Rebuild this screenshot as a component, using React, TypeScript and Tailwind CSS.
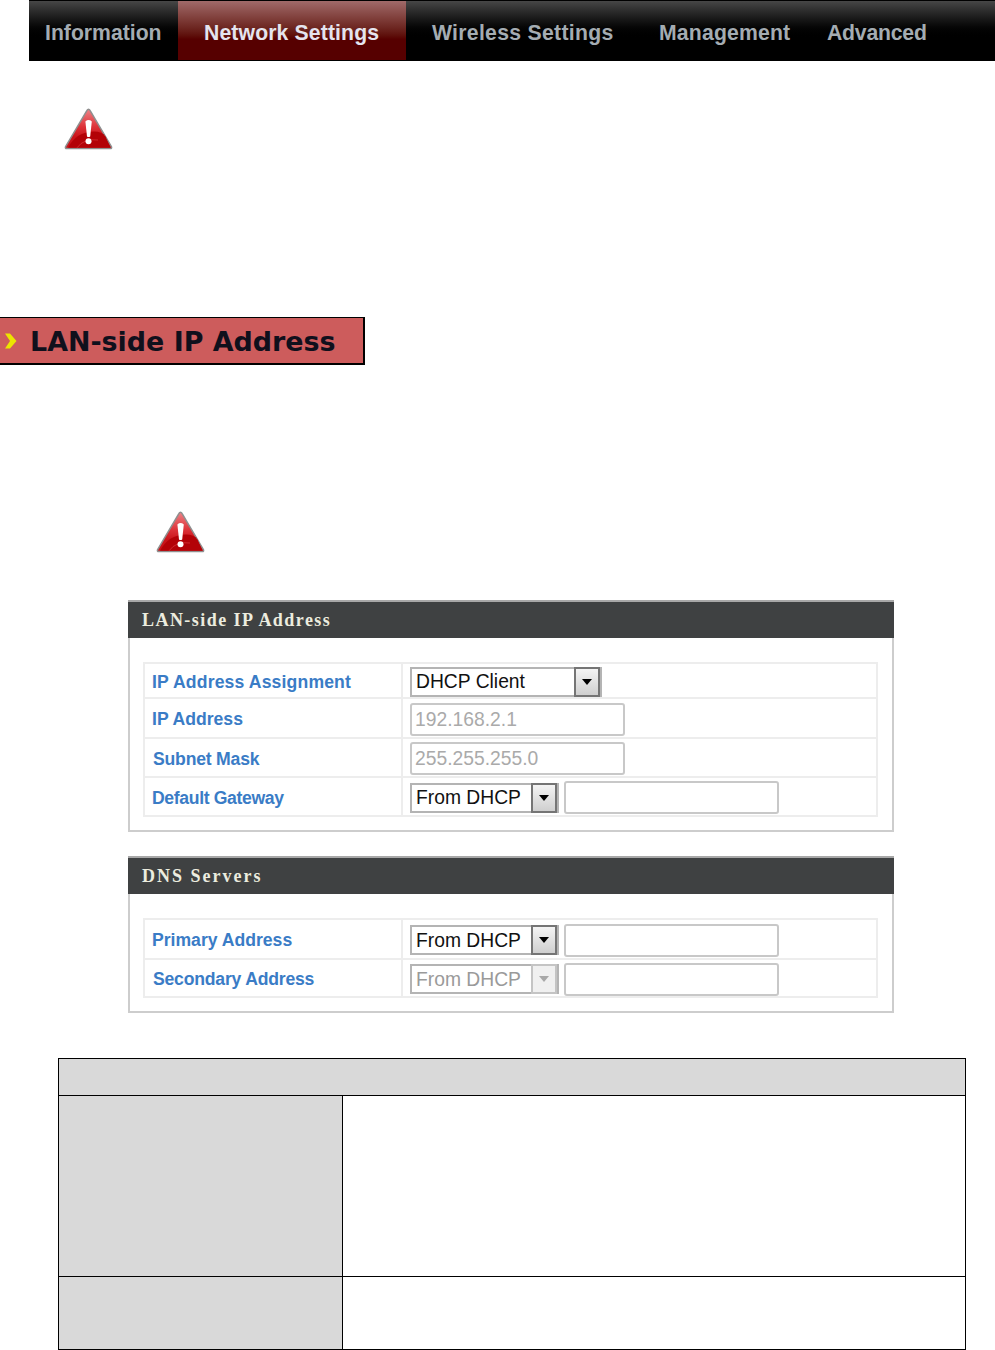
import { useId } from "react";

const sans = "font-['Liberation_Sans',Arial,sans-serif]";

function WarningIcon({ className }: { className: string }) {
  const id = useId();
  return (
    <svg viewBox="0 0 49 43" className={className}>
      <defs>
        <linearGradient id={id} x1="0" y1="0" x2="0" y2="1">
          <stop offset="0" stopColor="#ee8286" />
          <stop offset="0.45" stopColor="#dc3238" />
          <stop offset="0.7" stopColor="#c9141a" />
          <stop offset="1" stopColor="#c9141a" />
        </linearGradient>
      </defs>
      <path d="M24.5 1.2 Q25.4 1.2 26 2.4 L47.4 38.6 Q48.2 40.6 46.2 40.6 L2.8 40.6 Q0.8 40.6 1.6 38.6 L23 2.4 Q23.6 1.2 24.5 1.2 Z" fill={`url(#${id})`} stroke="#8f8f8f" strokeWidth="1.5" strokeLinejoin="round" />
      <path d="M4 39.8 Q12 24 30 23.5 Q38 23.5 41.5 28.5 L46.6 39.8 Z" fill="#b30207" />
      <path d="M13 39.8 Q20 30 34 32" fill="none" stroke="#d9383d" strokeWidth="1" opacity="0.7" />
      <path d="M21.4 13.5 Q24.5 10.6 27.8 13.5 L26.2 28.6 Q24.5 29.6 23 28.6 Z" fill="#fff" />
      <circle cx="24.5" cy="33.2" r="3" fill="#fff" />
    </svg>
  );
}

function SelectBox({ value, width, disabled }: { value: string; width: string; disabled?: boolean }) {
  return (
    <div className={`flex h-[30px] items-center border-2 border-[#b4b4b4] bg-white ${width}`}>
      <span className={`flex-1 pl-[4px] pt-[1px] text-[19.3px] leading-none ${disabled ? "text-[#9a9a9a]" : "text-[#111]"}`}>{value}</span>
      <div className={`flex h-[30px] w-[26px] items-center justify-center border-2 ${disabled ? "border-[#c4c4c4] bg-[#f0f0f0]" : "border-[#757575] bg-gradient-to-b from-[#f4f4f4] to-[#cfcfcf]"}`}>
        <svg viewBox="0 0 10 6" className="h-[6px] w-[10px]">
          <path d="M0 0 H10 L5 6 Z" fill={disabled ? "#a8a8a8" : "#000"} />
        </svg>
      </div>
    </div>
  );
}

function TextBox({ value = "" }: { value?: string }) {
  return (
    <input
      readOnly
      value={value}
      className="h-[33px] w-[215px] rounded-[3px] border-2 border-[#c8c8c8] bg-white px-[3px] pt-[1px] text-[19.3px] text-[#aaa] outline-none"
    />
  );
}

function FormRow({ label, height, children, last, labelCls = "pl-[7px]" }: { label: string; height: string; children: React.ReactNode; last?: boolean; labelCls?: string }) {
  return (
    <div className={`flex items-center ${height} ${last ? "" : "border-b-2 border-[#ededed]"}`}>
      <div className={`flex h-full w-[258px] shrink-0 items-center border-r-2 border-[#ededed] pt-[3px] ${labelCls} text-[17.6px] font-bold text-[#3a7cc6]`}>{label}</div>
      <div className="flex items-center gap-[5px] pl-[7px] pt-[2px]">{children}</div>
    </div>
  );
}

function Panel({ title, titleCls, children }: { title: string; titleCls: string; children: React.ReactNode }) {
  return (
    <div className="ml-[128px] w-[766px] border-2 border-t-0 border-[#cdcdcd]">
      <div className={`-mx-[2px] flex h-[38px] items-center border-t-2 border-[#a8a8a8] bg-[#3f4142] pl-[14px] font-['Liberation_Serif',serif] text-[18px] font-bold text-[#ececdf] ${titleCls}`}>{title}</div>
      <div className="mb-[13px] ml-[13px] mr-[14px] mt-[24px] border-2 border-[#ededed]">{children}</div>
    </div>
  );
}

const tabs = [
  { name: "Information", cls: "w-[149px] pl-[16px]", active: false },
  { name: "Network Settings", cls: "w-[228px] pl-[26px] tracking-[0.13px]", active: true },
  { name: "Wireless Settings", cls: "w-[227px] pl-[26px] tracking-[0.3px]", active: false },
  { name: "Management", cls: "w-[176px] pl-[26px] tracking-[0.18px]", active: false },
  { name: "Advanced", cls: "flex-1 pl-[18px] tracking-[-0.2px]", active: false },
];

export default function App() {
  return (
    <div className={`h-[1350px] w-[995px] overflow-hidden bg-white ${sans}`}>
      <nav className="ml-[29px] flex h-[61px] border-y border-black bg-gradient-to-b from-[#474747] via-[#000] via-65% to-[#000]">
        {tabs.map((t) => (
          <div
            key={t.name}
            className={`flex items-center pt-[5px] text-[21.2px] font-bold ${t.cls} ${t.active ? "bg-gradient-to-b from-[#a06a6a] via-[#560000] via-65% to-[#560000] text-[#e4e4ee]" : "text-[#a4acb2]"}`}
          >
            {t.name}
          </div>
        ))}
      </nav>

      <WarningIcon className="ml-[64px] mt-[47px] block h-[43px] w-[49px]" />

      <div className="mt-[166px] flex h-[48px] w-[365px] items-center border-b-2 border-r-2 border-t border-black bg-[#cd5c5c]">
        <svg viewBox="0 0 13 16" className="ml-[4px] h-[16px] w-[13px] shrink-0">
          <path d="M1 0.5 H6 L12.5 8 L6 15.5 H1 L6 8 Z" fill="#ece400" />
        </svg>
        <span className="ml-[13px] pt-[3px] font-['DejaVu_Sans',sans-serif] text-[26.9px] font-bold text-[#10101c]">LAN-side IP Address</span>
      </div>

      <WarningIcon className="ml-[156px] mt-[146px] block h-[43px] w-[49px]" />

      <div className="mt-[46px]">
        <Panel title="LAN-side IP Address" titleCls="tracking-[1.45px]">
          <FormRow label="IP Address Assignment" height="h-[35px]" labelCls="pl-[7px] tracking-[0.15px]">
            <SelectBox value="DHCP Client" width="w-[192px]" />
          </FormRow>
          <FormRow label="IP Address" height="h-[40px]">
            <TextBox value="192.168.2.1" />
          </FormRow>
          <FormRow label="Subnet Mask" height="h-[39px]" labelCls="pl-[8px] tracking-[-0.2px]">
            <TextBox value="255.255.255.0" />
          </FormRow>
          <FormRow label="Default Gateway" height="h-[37px]" last labelCls="pl-[7px] tracking-[-0.35px]">
            <SelectBox value="From DHCP" width="w-[149px]" />
            <TextBox />
          </FormRow>
        </Panel>
      </div>

      <div className="mt-[24px]">
        <Panel title="DNS Servers" titleCls="tracking-[2px]">
          <FormRow label="Primary Address" height="h-[40px]">
            <SelectBox value="From DHCP" width="w-[149px]" />
            <TextBox />
          </FormRow>
          <FormRow label="Secondary Address" height="h-[36px]" last labelCls="pl-[8px] tracking-[-0.2px]">
            <SelectBox value="From DHCP" width="w-[149px]" disabled />
            <TextBox />
          </FormRow>
        </Panel>
      </div>

      <div className="ml-[58px] mt-[45px] w-[908px] border-x border-t border-black">
        <div className="h-[37px] border-b border-black bg-[#d9d9d9]" />
        <div className="flex h-[181px] border-b border-black">
          <div className="w-[284px] border-r border-black bg-[#d9d9d9]" />
        </div>
        <div className="flex h-[73px] border-b border-black">
          <div className="w-[284px] border-r border-black bg-[#d9d9d9]" />
        </div>
      </div>
    </div>
  );
}
